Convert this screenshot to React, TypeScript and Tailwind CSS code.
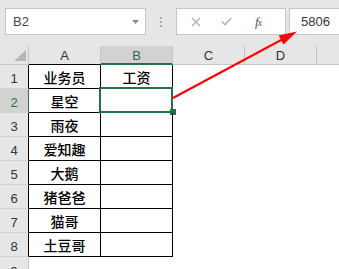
import React from "react";

const names = ["星空", "雨夜", "爱知趣", "大鹅", "猪爸爸", "猫哥", "土豆哥"];

export default function App() {
  const rows: { n: number; a: string; b: string }[] = [
    { n: 1, a: "业务员", b: "工资" },
    ...names.map((a, i) => ({ n: i + 2, a, b: "" })),
  ];
  return (
    <div className="relative w-[339px] h-[269px] overflow-hidden bg-white font-['Liberation_Sans',sans-serif]">
      {/* formula bar */}
      <div className="h-[46px] bg-[#e6e6e6] flex items-start pt-[8px] pl-[5px]">
        <div className="w-[141px] h-[27px] border border-[#c6c6c6] bg-white flex items-center justify-between pl-[7px] pr-[6px] text-[13px] text-[#444]">
          <span>B2</span>
          <svg width="7" height="4" viewBox="0 0 7 4">
            <path d="M0 0 L7 0 L3.5 4 Z" fill="#8a8a8a" />
          </svg>
        </div>
        <div className="w-[30px] h-[27px] flex flex-col items-center justify-center gap-[2px]">
          <div className="w-[2px] h-[2px] bg-[#ababab]" />
          <div className="w-[2px] h-[2px] bg-[#ababab]" />
          <div className="w-[2px] h-[2px] bg-[#ababab]" />
        </div>
        <div className="w-[110px] h-[27px] border border-[#c6c6c6] bg-white flex items-center">
          <svg className="ml-[14px]" width="10" height="10" viewBox="0 0 10 10">
            <path d="M1 1 L9 9 M9 1 L1 9" stroke="#b0b0b0" strokeWidth="1.3" />
          </svg>
          <svg className="ml-[20px]" width="11" height="9" viewBox="0 0 11 9">
            <path d="M0.8 4.5 L4 7.8 L10.2 1" stroke="#b0b0b0" strokeWidth="1.4" fill="none" />
          </svg>
          <span className="ml-[23px] text-[13px] italic text-[#555] font-['Liberation_Serif',serif] tracking-[-1px]">
            f<span className="text-[10px]">x</span>
          </span>
        </div>
        <div className="ml-[3px] flex-1 h-[27px] border-y border-l border-[#c6c6c6] bg-white flex items-center pl-[11px] text-[13px] text-[#333]">
          5806
        </div>
      </div>

      {/* column headers */}
      <div className="flex h-[19px] bg-[#e6e6e6] text-[13px] text-[#333]">
        <div className="w-[29px] border-r border-b border-[#c6c6c6] relative">
          <svg className="absolute left-[14px] top-[4px]" width="12" height="11" viewBox="0 0 12 11">
            <path d="M12 0 L12 11 L0 11 Z" fill="#b6b6b6" />
          </svg>
        </div>
        <div className="w-[72px] border-r border-r-[#c6c6c6] border-b border-b-black flex items-end justify-center leading-none pb-[2px]">
          A
        </div>
        <div className="w-[72px] bg-[#d2d2d2] border-r border-r-[#c6c6c6] border-b-2 border-b-[#217346] flex items-end justify-center leading-none pb-[1px] text-[#217346]">
          B
        </div>
        <div className="w-[72px] border-r border-b border-[#c6c6c6] flex items-end justify-center leading-none pb-[2px]">
          C
        </div>
        <div className="w-[72px] border-r border-b border-[#c6c6c6] flex items-end justify-center leading-none pb-[2px]">
          D
        </div>
        <div className="flex-1 border-b border-[#c6c6c6]" />
      </div>

      {/* data rows */}
      {rows.map((r) => {
        const sel = r.n === 2;
        return (
          <div key={r.n} className="flex h-[24px]">
            <div
              className={
                sel
                  ? "w-[29px] bg-[#d2d2d2] border-b border-b-[#d4d4d4] border-r border-r-[#217346] flex items-end justify-center leading-none pb-[3px] text-[13px] text-[#217346]"
                  : "w-[29px] bg-[#e6e6e6] border-b border-b-[#d4d4d4] border-r border-r-black flex items-end justify-center leading-none pb-[3px] text-[13px] text-[#333]"
              }
            >
              {r.n}
            </div>
            <div className="w-[72px] border-r border-b border-black flex items-center justify-center text-[14px] text-black font-medium font-['Noto_Sans_CJK_SC',sans-serif] leading-none">
              {r.a}
            </div>
            <div className="relative w-[72px] border-r border-b border-black flex items-center justify-center text-[14px] text-black font-medium font-['Noto_Sans_CJK_SC',sans-serif] leading-none">
              {r.b}
              {sel && (
                <>
                  <div className="absolute left-[-2px] top-[-2px] w-[74px] h-[26px] border-2 border-[#217346]" />
                  <div className="absolute left-[69px] top-[20px] w-[6px] h-[6px] bg-[#217346]" />
                </>
              )}
            </div>
            <div className="flex-1" />
          </div>
        );
      })}
      <div className="flex h-[24px]">
        <div className="w-[29px] bg-[#e6e6e6] border-r border-[#c6c6c6] flex items-end justify-center leading-none pb-[3px] text-[13px] text-[#333]">
          9
        </div>
        <div className="flex-1" />
      </div>

      {/* red arrow */}
      <svg className="absolute left-0 top-0 pointer-events-none" width="339" height="269" viewBox="0 0 339 269">
        <line x1="173" y1="98" x2="283" y2="39" stroke="#ff0000" strokeWidth="2" />
        <path d="M297 31.5 L283.5 44.4 L278.7 35.6 Z" fill="#ff0000" />
      </svg>
    </div>
  );
}
